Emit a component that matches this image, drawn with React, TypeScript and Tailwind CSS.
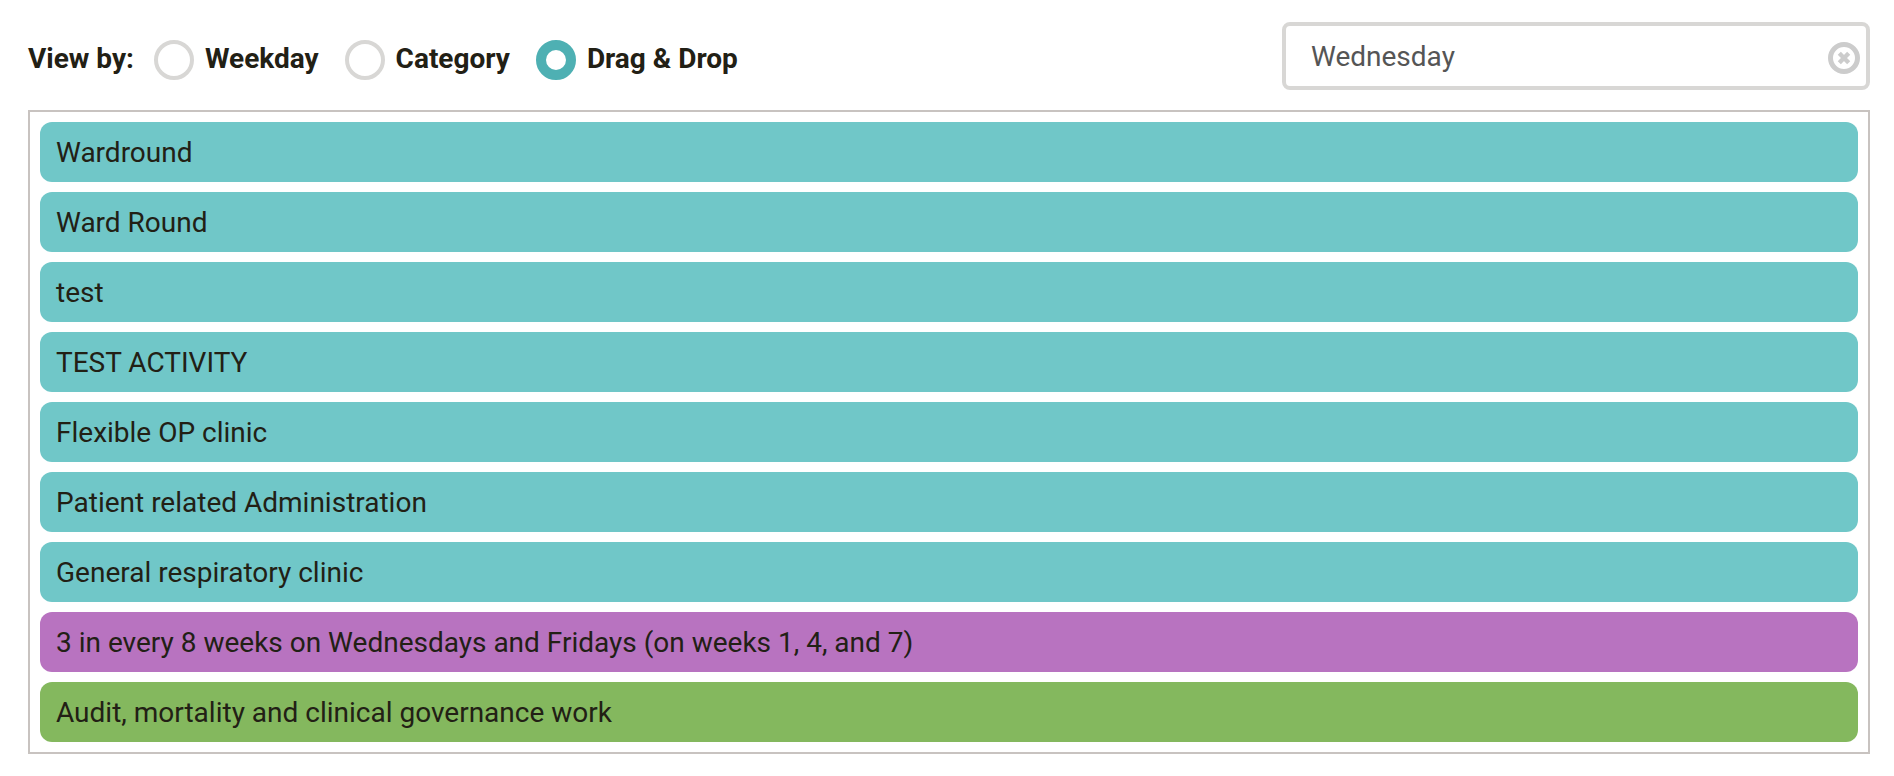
import { useState } from "react";

const views = ["Weekday", "Category", "Drag & Drop"];

const activities = [
  { name: "Wardround", color: "bg-[#70c7c8]" },
  { name: "Ward Round", color: "bg-[#70c7c8]" },
  { name: "test", color: "bg-[#70c7c8]" },
  { name: "TEST ACTIVITY", color: "bg-[#70c7c8]" },
  { name: "Flexible OP clinic", color: "bg-[#70c7c8]" },
  { name: "Patient related Administration", color: "bg-[#70c7c8]" },
  { name: "General respiratory clinic", color: "bg-[#70c7c8]" },
  { name: "3 in every 8 weeks on Wednesdays and Fridays (on weeks 1, 4, and 7)", color: "bg-[#b873c0]" },
  { name: "Audit, mortality and clinical governance work", color: "bg-[#84b85e]" },
];

function ClearIcon() {
  return (
    <svg viewBox="0 0 32 32" className="size-8" fill="none" stroke="#cccccc" aria-hidden="true">
      <circle cx="16" cy="16" r="13.5" strokeWidth="5" />
      <path d="M11.3 11.3 L20.7 20.7 M20.7 11.3 L11.3 20.7" strokeWidth="4.4" />
    </svg>
  );
}

export default function App() {
  const [view, setView] = useState("Drag & Drop");
  const [day, setDay] = useState("Wednesday");

  return (
    <main className="bg-white pt-[22px] pr-6 pb-5 pl-7 font-['Roboto',sans-serif] text-[28px] leading-10 text-[#222015]">
      <header className="flex items-center justify-between gap-8">
        <div role="radiogroup" aria-labelledby="view-by" className="flex items-center pt-1.5 font-bold">
          <span id="view-by" className="mr-5">
            View by:
          </span>
          <div className="flex gap-[26px]">
            {views.map((name) => (
              <label key={name} className="flex items-center gap-[11px]">
                <input
                  type="radio"
                  name="view"
                  checked={view === name}
                  onChange={() => setView(name)}
                  className="mt-0.5 size-10 shrink-0 appearance-none rounded-full border-4 border-[#d8d7d5] bg-white checked:border-10 checked:border-[#4eb0b3]"
                />
                {name}
              </label>
            ))}
          </div>
        </div>
        <div className="flex h-[68px] w-[588px] items-center rounded-lg border-4 border-[#d8d7d5] pr-1.5 pl-[25px]">
          <input
            type="text"
            aria-label="Day"
            value={day}
            onChange={(e) => setDay(e.target.value)}
            className="mt-0.5 h-10 min-w-0 flex-1 bg-transparent text-[#555555] outline-none"
          />
          <button type="button" aria-label="Clear day" onClick={() => setDay("")} className="mt-1">
            <ClearIcon />
          </button>
        </div>
      </header>
      <ul className="mt-5 flex flex-col gap-2.5 border-2 border-[#c8c3c0] p-2.5">
        {activities.map((activity) => (
          <li key={activity.name} draggable className={`cursor-move rounded-xl px-4 pt-[11px] pb-[9px] ${activity.color}`}>
            {activity.name}
          </li>
        ))}
      </ul>
    </main>
  );
}
